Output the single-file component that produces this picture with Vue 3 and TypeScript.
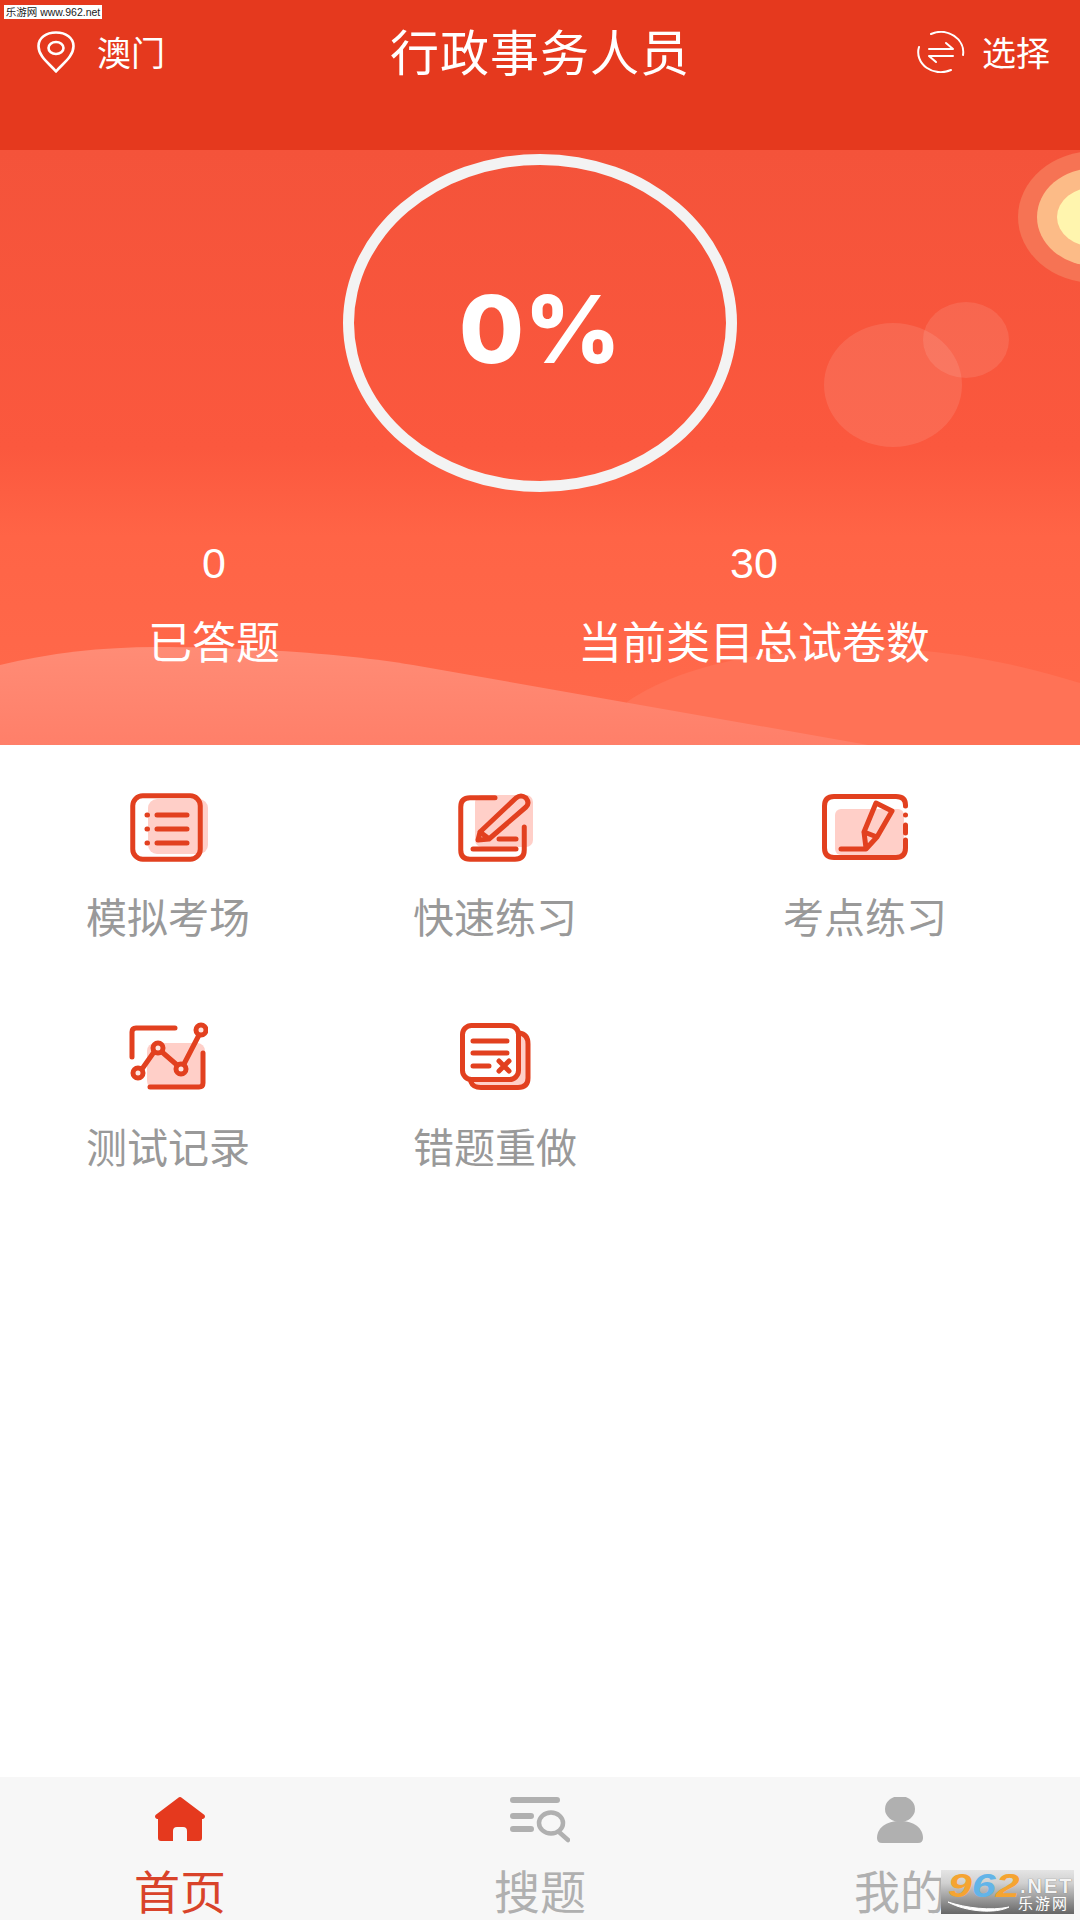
<script setup lang="ts">
const features = [
  { key: 'exam', label: '模拟考场' },
  { key: 'quick', label: '快速练习' },
  { key: 'point', label: '考点练习' },
  { key: 'record', label: '测试记录' },
  { key: 'wrong', label: '错题重做' },
]

const tabs = [
  { key: 'home', label: '首页', active: true },
  { key: 'search', label: '搜题', active: false },
  { key: 'mine', label: '我的', active: false },
]
</script>

<template>
  <div class="page">
    <header class="top-bar">
      <div class="top-left">
        <svg class="top-icon pin" viewBox="0 0 38 42" fill="none" stroke="#fff" stroke-width="2.600" stroke-linejoin="round">
          <path d="M19 40.500 C13 33 1.500 26 1.500 15 C1.500 7 9 1.500 19 1.500 C29 1.500 36.500 7 36.500 15 C36.500 26 25 33 19 40.500 Z" />
          <ellipse cx="19" cy="17" rx="7.500" ry="6" />
        </svg>
        <span>澳门</span>
      </div>
      <h1>行政事务人员</h1>
      <div class="top-right">
        <svg class="top-icon swap" viewBox="0 0 48 42" fill="none" stroke="#fff" stroke-width="2" stroke-linecap="round" stroke-linejoin="round">
          <path d="M14 3 A22.500 20 0 0 1 46 24" />
          <path d="M34 39 A22.500 20 0 0 1 2 16" />
          <path d="M12 18 H36 L29 12" />
          <path d="M36 25 H12 L19 31" />
        </svg>
        <span>选择</span>
      </div>
    </header>

    <section class="hero">
      <svg class="hero-bg" viewBox="0 0 1080 595" preserveAspectRatio="none">
        <defs>
          <linearGradient id="waveLeft" x1="0" y1="0" x2="0" y2="1">
            <stop offset="0" stop-color="#ff8c76" />
            <stop offset="1" stop-color="#ff7f69" />
          </linearGradient>
        </defs>
        <ellipse cx="1095" cy="67" rx="77" ry="66" fill="#f67354" />
        <ellipse cx="1095" cy="67" rx="58" ry="49" fill="#fcbb87" />
        <ellipse cx="1095" cy="67" rx="38" ry="30" fill="#fff5ae" />
        <ellipse cx="893" cy="235" rx="69" ry="62" fill="#fff" fill-opacity="0.1" />
        <ellipse cx="966" cy="190" rx="43" ry="38" fill="#fff" fill-opacity="0.1" />
        <path d="M627 552 C680 515 770 498 861 498 C950 498 1020 515 1080 533 V595 H627 Z" fill="#ff7256" />
        <path d="M0 515 C50 503 100 497 158 497 C240 497 343 503 413 515 L868 595 H0 Z" fill="url(#waveLeft)" />
      </svg>

      <div class="ring"><span>0%</span></div>

      <div class="stats">
        <div class="stat">
          <div class="stat-num">0</div>
          <div class="stat-label">已答题</div>
        </div>
        <div class="stat">
          <div class="stat-num">30</div>
          <div class="stat-label">当前类目总试卷数</div>
        </div>
      </div>
    </section>

    <main class="features">
      <div v-for="item in features" :key="item.key" class="feature">
        <svg v-if="item.key === 'exam'" class="feature-icon" viewBox="0 0 80 70" fill="none" stroke="#e2401f" stroke-width="5" stroke-linecap="round" stroke-linejoin="round">
          <rect x="20" y="7" width="60" height="55" rx="9" fill="#ffcfc8" stroke="none" />
          <rect x="4.750" y="3.750" width="67.500" height="63.500" rx="10" />
          <path d="M29 23 H59 M29 37 H59 M29 51 H59" />
          <path d="M19 23 H19.500 M19 37 H19.500 M19 51 H19.500" />
        </svg>
        <svg v-else-if="item.key === 'quick'" class="feature-icon" viewBox="0 0 80 70" fill="none" stroke="#e2401f" stroke-width="5" stroke-linecap="round" stroke-linejoin="round">
          <rect x="20" y="3" width="58" height="52" rx="7" fill="#ffcfc8" stroke="none" />
          <path d="M40 5.750 H15 Q5.750 5.750 5.750 15 V58 Q5.750 67.250 15 67.250 H60 Q69.250 67.250 69.250 58 V35" />
          <path d="M18 57 H61" />
          <path d="M44 47 H61" />
          <path d="M23 48 L25 40 L61 6 Q66 2 71 6 Q75 11 71 15 L34 47 Z M25 40 L33 46" />
        </svg>
        <svg v-else-if="item.key === 'point'" class="feature-icon wide" viewBox="0 0 90 70" fill="none" stroke="#e2401f" stroke-width="5" stroke-linecap="round" stroke-linejoin="round">
          <rect x="15" y="17" width="69" height="46" rx="6" fill="#ffcfc8" stroke="none" />
          <path d="M85.500 14 V13 Q85.500 4.500 76 4.500 H14 Q4.500 4.500 4.500 14 V56 Q4.500 65.500 14 65.500 H76 Q85.500 65.500 85.500 56 V48" />
          <path d="M85.500 23 H85.510 M85.500 33 V41" />
          <path d="M21 57 H46 L57 45 L72 19 L56 11 L44 40 L46 56 M44 40 L57 45" />
        </svg>
        <svg v-else-if="item.key === 'record'" class="feature-icon" viewBox="0 0 80 70" fill="none" stroke="#e2401f" stroke-width="5" stroke-linecap="round" stroke-linejoin="round">
          <rect x="19" y="21" width="58" height="46" rx="8" fill="#ffcfc8" stroke="none" />
          <path d="M47 6 H8 Q4 6 4 10 V35" />
          <path d="M22 65 H71 Q75 65 75 61 V31" />
          <path d="M14 47 L26 30 M34 30 L49 43 M56 42 L71 13" />
          <circle cx="10" cy="51" r="5" fill="#ffe5e0" />
          <circle cx="30" cy="26" r="5" fill="#ffe5e0" />
          <circle cx="53" cy="47" r="5" fill="#ffe5e0" />
          <circle cx="73" cy="8" r="5" fill="#ffe5e0" />
        </svg>
        <svg v-else class="feature-icon" viewBox="0 0 80 70" fill="none" stroke="#e2401f" stroke-width="5" stroke-linecap="round" stroke-linejoin="round">
          <path d="M64 11 Q73 12 73 22 V56 Q73 65.500 63 65.500 H26 Q18 65.500 16 60" fill="#ffcfc8" />
          <rect x="7.500" y="3.500" width="56" height="54" rx="9" fill="#fff" />
          <path d="M18 19 H52 M18 31 H52 M18 44 H34" />
          <path d="M44 39 L54 49 M54 39 L44 49" />
        </svg>
        <span class="feature-label">{{ item.label }}</span>
      </div>
    </main>

    <nav class="tab-bar">
      <div v-for="tab in tabs" :key="tab.key" class="tab" :class="{ active: tab.active }">
        <svg v-if="tab.key === 'home'" class="tab-icon" viewBox="0 0 60 46">
          <path fill="#e5391e" d="M28 1 Q30 -1 32 1 L54.500 18 Q56 21 53 22 H52 V41 Q52 44 49 44 H37 V34 Q37 30 33 30 H27 Q23 30 23 34 V44 H11 Q8 44 8 41 V22 H7 Q4 21 5.500 18 Z" />
        </svg>
        <svg v-else-if="tab.key === 'search'" class="tab-icon" viewBox="0 0 60 46" fill="none" stroke="#b0b0b0" stroke-linecap="round">
          <path d="M3 3 H47 M3 19 H21 M3 32 H21" stroke-width="6" />
          <ellipse cx="41" cy="26" rx="12" ry="10.500" stroke-width="4.500" />
          <path d="M49 35 L58 43" stroke-width="4.500" />
        </svg>
        <svg v-else class="tab-icon" viewBox="0 0 60 46">
          <ellipse cx="30" cy="12" rx="15" ry="13" fill="#b0b0b0" />
          <path fill="#b0b0b0" d="M30 24 C44 24 53 31 53 41 Q53 46 48 46 H12 Q7 46 7 41 C7 31 16 24 30 24 Z" />
        </svg>
        <span class="tab-label">{{ tab.label }}</span>
      </div>
    </nav>

    <div class="mark-top">乐游网 www.962.net</div>
    <div class="mark-bottom">
      <svg class="swoosh" viewBox="0 0 133 44" fill="none">
        <path d="M7 32 C25 42 55 44 68 37 C50 41 25 38 7 32 Z" fill="#fff" stroke="#fff" stroke-width="1" />
      </svg>
      <div class="mark-brand">
        <div class="mark-digits"><b class="orange">9</b><b class="blue">6</b><b class="orange">2</b></div>
        <span class="mark-net">.NET</span>
      </div>
      <div class="mark-sub">乐游网</div>
    </div>
  </div>
</template>

<style>
html,
body {
  margin: 0;
  background: #fff;
}
</style>

<style scoped>
.page {
  position: relative;
  display: flex;
  flex-direction: column;
  width: 1080px;
  height: 1920px;
  overflow: hidden;
  background: #fff;
  font-family: "Liberation Sans", "Noto Sans CJK SC", sans-serif;
}

.top-bar {
  display: grid;
  grid-template-columns: 1fr auto 1fr;
  align-items: center;
  align-content: start;
  flex: none;
  height: 150px;
  padding: 31px 30px 0;
  box-sizing: border-box;
  background: #e5391e;
  color: #fff;
  font-size: 34px;
  line-height: 46px;
}

.top-left,
.top-right {
  display: flex;
  align-items: center;
}

.top-right {
  justify-content: flex-end;
}

.top-icon {
  align-self: flex-start;
  height: 42px;
  flex: none;
}

.pin {
  width: 38px;
  margin: 0 22px 0 7px;
}

.swap {
  width: 48px;
  margin-right: 17px;
}

.top-bar h1 {
  margin: 0;
  font-size: 49px;
  font-weight: 400;
  letter-spacing: 1px;
  line-height: 46px;
}

.hero {
  position: relative;
  flex: none;
  height: 595px;
  background: linear-gradient(#f4533a 0, #fb583e 50%, #ff6446 65%, #ff6a4c 100%);
  color: #fff;
}

.hero-bg {
  position: absolute;
  top: 0;
  left: 0;
  width: 1080px;
  height: 595px;
}

.ring {
  position: relative;
  display: flex;
  align-items: center;
  justify-content: center;
  width: 394px;
  height: 338px;
  margin: 4px auto 0;
  padding-top: 12px;
  border: 11px solid #f3f3f3;
  border-radius: 50%;
  box-sizing: border-box;
  font-family: Inter, "Liberation Sans", sans-serif;
  font-size: 94px;
  font-weight: 800;
}

.stats {
  position: relative;
  display: grid;
  grid-template-columns: 428px 1fr;
  margin-top: 48px;
  text-align: center;
}

.stat-num {
  font-size: 43px;
  line-height: 46px;
}

.stat-label {
  margin-top: 33px;
  font-size: 44px;
  line-height: 50px;
}

.features {
  display: grid;
  flex: 1;
  grid-template-columns: 336px 318px 422px;
  grid-auto-rows: 230px;
  align-content: start;
  padding-top: 47px;
}

.feature {
  display: flex;
  flex-direction: column;
  align-items: center;
}

.feature-icon {
  width: 80px;
  height: 70px;
}

.feature-icon.wide {
  width: 90px;
}

.feature-label {
  margin-top: 33px;
  color: #999;
  font-size: 41px;
  line-height: 48px;
}

.tab-bar {
  display: grid;
  flex: none;
  grid-template-columns: repeat(3, 1fr);
  height: 143px;
  background: #f7f7f7;
}

.tab {
  display: flex;
  flex-direction: column;
  align-items: center;
  padding-top: 20px;
  color: #b0b0b0;
}

.tab.active {
  color: #d9432a;
}

.tab-icon {
  width: 60px;
  height: 46px;
}

.tab-label {
  margin-top: 24px;
  font-size: 46px;
  line-height: 52px;
}

.mark-top {
  position: absolute;
  top: 5px;
  left: 4px;
  width: 98px;
  height: 14px;
  background: #fff;
  color: #222;
  font-size: 10.500px;
  line-height: 14px;
  white-space: nowrap;
  text-align: center;
}

.mark-bottom {
  position: absolute;
  top: 1870px;
  left: 941px;
  width: 133px;
  height: 44px;
  background: linear-gradient(#e4e4e4, #d0d0d0 30%, #666);
}

.swoosh {
  position: absolute;
  top: 0;
  left: 0;
  width: 133px;
  height: 44px;
}

.mark-brand {
  position: relative;
  display: flex;
  align-items: flex-end;
  height: 30px;
  padding: 1px 0 0 7px;
}

.mark-digits {
  width: 72px;
  font-size: 33px;
  font-style: italic;
  line-height: 30px;
  white-space: nowrap;
  transform: scaleX(1.300);
  transform-origin: left;
}

.mark-net {
  margin-bottom: 4px;
  color: #f4f4f4;
  font-size: 20px;
  font-weight: 700;
  letter-spacing: 2px;
  line-height: 22px;
  text-shadow: 0 0 1px #555;
}

.orange {
  color: #f5a431;
}

.blue {
  color: #62b4e8;
}

.mark-sub {
  position: absolute;
  right: 5px;
  bottom: 2px;
  color: #fff;
  font-size: 15px;
  letter-spacing: 2px;
  line-height: 16px;
}
</style>
